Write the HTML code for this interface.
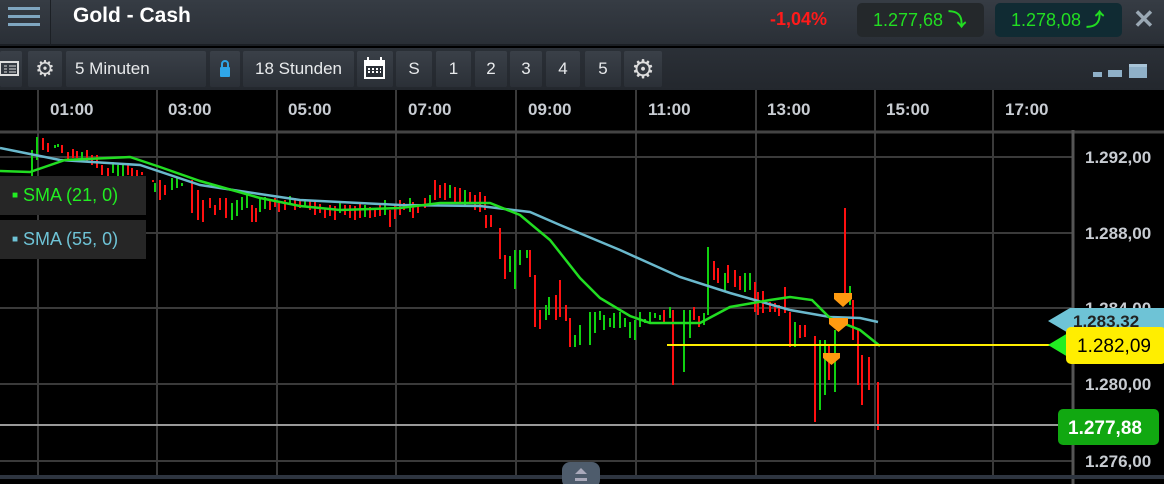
<!DOCTYPE html><html><head><style>
*{margin:0;padding:0;box-sizing:border-box}
body{width:1164px;height:484px;overflow:hidden;background:#000;font-family:"Liberation Sans",sans-serif;position:relative}
.hdr{position:absolute;left:0;top:0;width:1164px;height:46px;background:linear-gradient(#363c44,#2a2f36);border-bottom:2px solid #1b1f24}
.tb{position:absolute;left:0;top:48px;width:1164px;height:42px;background:linear-gradient(#2b3037,#23272d)}
.b{position:absolute;top:3px;height:36px;background:linear-gradient(#3a4048,#2b3037);color:#e8eaec;font-size:17px;line-height:36px;text-align:center;border-radius:2px}
.abs{position:absolute}
</style></head><body>
<div class="hdr">
 <div class="abs" style="left:8px;top:7px;width:32px;height:3px;background:#7fa6c0;box-shadow:0 8px 0 #7fa6c0,0 16px 0 #7fa6c0"></div>
 <div class="abs" style="left:50px;top:0;width:1px;height:46px;background:#1c2025"></div>
 <div class="abs" style="left:73px;top:4px;color:#fff;font-weight:bold;font-size:21px">Gold - Cash</div>
 <div class="abs" style="left:770px;top:9px;color:#ff1a1a;font-weight:bold;font-size:18px">-1,04%</div>
 <div class="abs" style="left:857px;top:3px;width:127px;height:34px;background:#24282b;border-radius:5px;color:#22dd22;font-size:18px;line-height:34px;padding-left:16px">1.277,68 <span style="font-weight:bold">⤵</span></div>
 <div class="abs" style="left:995px;top:3px;width:127px;height:34px;background:#102b33;border-radius:5px;color:#22dd22;font-size:18px;line-height:34px;padding-left:16px">1.278,08 <span style="font-weight:bold">⤴</span></div>
 <div class="abs" style="left:1133px;top:4px;color:#9aa8b4;font-size:26px;font-weight:bold">✕</div>
</div>
<div class="tb">
 <div class="b" style="left:0;width:22px"><svg width="22" height="36"><rect x="0" y="11" width="18" height="13" fill="none" stroke="#ddd" stroke-width="2"/><path d="M4 15h3M9 15h7M4 18h3M9 18h7M4 21h3M9 21h7" stroke="#ddd"/></svg></div>
 <div class="b" style="left:28px;width:34px;font-size:22px;color:#ddd">⚙</div>
 <div class="b" style="left:66px;width:140px;text-align:left;padding-left:9px">5 Minuten</div>
 <div class="b" style="left:210px;width:30px"><svg width="30" height="36"><rect x="10" y="16" width="10" height="10" rx="1" fill="#2fa6e8"/><path d="M12 17v-4a3 3 0 0 1 6 0v4" stroke="#2fa6e8" stroke-width="2" fill="none"/></svg></div>
 <div class="b" style="left:243px;width:111px">18 Stunden</div>
 <div class="b" style="left:357px;width:36px"><svg width="36" height="36"><rect x="7" y="9" width="21" height="19" fill="#fff"/><rect x="9" y="15" width="17" height="11" fill="#2b3037"/><path d="M11 18h2M15 18h2M19 18h2M11 21h2M15 21h2M19 21h2M23 18h1M23 21h1" stroke="#fff" stroke-width="2"/><path d="M11 6v5M24 6v5" stroke="#fff" stroke-width="2"/></svg></div>
 <div class="b" style="left:396px;width:36px">S</div>
 <div class="b" style="left:436px;width:35px">1</div>
 <div class="b" style="left:475px;width:32px">2</div>
 <div class="b" style="left:510px;width:32px">3</div>
 <div class="b" style="left:546px;width:34px">4</div>
 <div class="b" style="left:585px;width:36px">5</div>
 <div class="b" style="left:624px;width:38px;font-size:26px;color:#ddd">⚙</div>
 <div class="abs" style="left:1093px;top:24px;width:9px;height:5px;background:#8fb0c8"></div>
 <div class="abs" style="left:1108px;top:22px;width:14px;height:7px;background:#8fb0c8"></div>
 <div class="abs" style="left:1129px;top:16px;width:18px;height:14px;background:#8fb0c8;border-top:3px solid #a8c4d8"></div>
</div>
<svg class="abs" style="left:0;top:90px" width="1164" height="394" font-family="Liberation Sans" >
 <g stroke="#3a3a3a" stroke-width="2">
  <path d="M38 0V386M157 0V386M277 0V386M396 0V386M516 0V386M636 0V386M756 0V386M875 0V386M993 0V386"/>
  <path d="M0 67H1073M0 143H1073M0 218H1073M0 294H1073M0 371H1073"/>
 </g>
 <path d="M0 42H1164" stroke="#444" stroke-width="3"/>
 <path d="M1073 40V394" stroke="#555" stroke-width="3"/>
 <path d="M0 387H1164" stroke="#2e3540" stroke-width="4"/>
 <g fill="#c8ccd2" font-size="17" font-weight="bold">
  <text x="50" y="25">01:00</text><text x="168" y="25">03:00</text><text x="288" y="25">05:00</text><text x="408" y="25">07:00</text><text x="528" y="25">09:00</text><text x="648" y="25">11:00</text><text x="767" y="25">13:00</text><text x="886" y="25">15:00</text><text x="1005" y="25">17:00</text>
  <text x="1085" y="73">1.292,00</text><text x="1085" y="149">1.288,00</text><text x="1085" y="224">1.284,00</text><text x="1085" y="300">1.280,00</text><text x="1085" y="377">1.276,00</text>
 </g>
</svg>
<svg class="abs" style="left:0;top:0" width="1164" height="484">
 <path stroke="#ff1010" stroke-width="2" fill="none" d="M43 138V150M48 143V152M62 145V153M68 152V160M73 149V158M77 151V158M87 150V162M92 155V165M97 155V168M102 165V175M108 168V178M128 163V175M132 168V177M137 170V180M142 172V175M153 180V182M160 180V200M165 185V195M192 180V213M198 190V220M203 200V222M210 198V208M215 205V215M220 198V210M226 198V218M252 205V222M256 208V222M270 200V210M275 198V207M279 202V212M285 200V210M295 198V210M300 200V208M310 200V210M315 202V215M320 204V213M325 208V218M330 205V216M335 206V220M345 205V215M350 205V218M355 206V220M360 202V218M370 207V218M375 208V217M380 205V216M390 210V227M395 205V219M400 200V215M404 203V210M413 202V218M418 205V213M425 198V208M435 180V200M440 185V198M445 183V200M455 187V202M460 188V203M470 192V204M475 195V210M480 192V212M485 196V210M486 215V228M491 215V227M500 228V259M505 255V279M530 250V277M535 275V327M540 310V329M556 295V320M560 280V317M566 305V321M570 318V347M664 310V322M673 310V385M694 307V320M699 316V327M714 261V280M718 268V283M728 265V283M735 270V287M740 276V290M755 282V312M758 292V315M763 291V313M770 302V312M775 303V312M779 305V316M785 287V313M790 312V347M800 325V338M805 325V337M815 336V422M829 345V380M845 208V300M853 300V340M858 330V385M862 355V405M869 357V390M878 382V430"/>
 <path stroke="#10d010" stroke-width="2" fill="none" d="M32 150V187M37 137V160M55 145V148M58 144V147M82 152V160M113 162V173M118 165V180M123 165V177M155 183V192M172 178V190M177 177V188M182 183V186M232 203V220M237 200V216M242 197V210M247 195V208M260 199V212M265 197V209M290 196V205M305 199V206M340 203V213M365 205V217M385 200V215M410 198V212M430 195V205M450 185V198M465 190V205M510 256V272M515 250V289M520 250V265M527 250V258M546 305V320M549 297V315M575 335V347M580 325V345M590 312V345M595 312V333M600 311V320M604 315V330M610 318V327M614 313V328M620 312V328M625 318V327M630 322V338M635 320V340M640 312V327M645 319V323M650 312V322M655 313V318M660 315V320M670 307V318M684 310V372M690 310V338M704 313V325M708 247V315M725 273V291M745 273V292M750 273V290M795 322V347M820 340V410M825 340V395M835 330V392M850 286V305"/>
 <polyline fill="none" stroke="#6ab8cc" stroke-width="2.5" points="0,148 25,153 60,160 140,165 200,185 300,200 400,205 480,206 530,212 560,225 620,250 680,277 730,293 790,310 830,317 860,318 878,322"/>
 <polyline fill="none" stroke="#22dd22" stroke-width="2.5" points="0,171 30,172 65,160 130,157 160,167 200,181 260,198 300,206 340,210 400,208 440,203 490,203 520,215 550,240 580,278 600,298 630,316 650,323 700,323 730,307 770,300 790,297 812,300 830,318 860,330 880,346"/>
 <path d="M667 345H1060" stroke="#ffee00" stroke-width="2"/>
 <path d="M0 425H1060" stroke="#999" stroke-width="2"/>
 <g fill="#ff9a10"><path d="M834 293h18v6l-9 8l-9-8z"/><path d="M829 318h19v6l-9.5 8l-9.5-8z"/><path d="M823 353h17v5l-8.5 7l-8.5-7z"/></g>
 <path d="M1048 321L1070 308H1164V334H1070Z" fill="#6ec3d6"/>
 <text x="1073" y="327" font-size="17" font-weight="bold" fill="#222">1.283,32</text>
 <path d="M1048 345L1068 333V357Z" fill="#22ee22"/>
 <rect x="1066" y="327" width="100" height="37" rx="5" fill="#ffee00"/>
 <text x="1077" y="352" font-size="19" fill="#000">1.282,09</text>
 <rect x="1058" y="409" width="101" height="36" rx="5" fill="#11a811"/>
 <text x="1068" y="434" font-size="19" font-weight="bold" fill="#fff">1.277,88</text>
 <rect x="562" y="462" width="38" height="26" rx="8" fill="#4e5c6c"/>
 <path d="M575 474l6-6l6 6z M575 478h12v3h-12z" fill="#aab"/>
</svg>
<div class="abs" style="left:0;top:176px;width:146px;height:39px;background:#262626;color:#22ee22;font-size:18px;line-height:39px;padding-left:12px"><span style="font-size:10px;vertical-align:3px">■</span> SMA (21, 0)</div>
<div class="abs" style="left:0;top:220px;width:146px;height:39px;background:#262626;color:#6ec3d6;font-size:18px;line-height:39px;padding-left:12px"><span style="font-size:10px;vertical-align:3px">■</span> SMA (55, 0)</div>
</body></html>
